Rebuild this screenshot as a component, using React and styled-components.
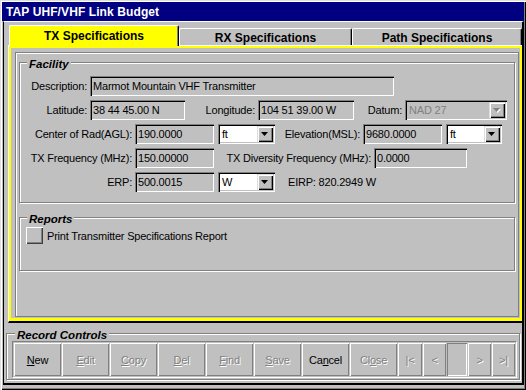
import React from 'react';
import styled, { createGlobalStyle } from 'styled-components';

const Global = createGlobalStyle`
  html, body { margin: 0; padding: 0; background: #c0c0c0; }
  body { font-family: "Liberation Sans", Arial, sans-serif; font-size: 11px; color: #000; letter-spacing: -0.2px; }
  * { box-sizing: border-box; }
`;

const sunken = `
  box-shadow: inset 1px 1px 0 #808080, inset 2px 2px 0 #000,
    inset -1px -1px 0 #fff, inset -2px -2px 0 #c0c0c0;
`;
const raised = `
  box-shadow: inset 1px 1px 0 #dfdfdf, inset 2px 2px 0 #fff,
    inset -1px -1px 0 #000, inset -2px -2px 0 #808080;
`;

const Window = styled.div`
  width: 526px;
  height: 390px;
  background: #c0c0c0;
  padding: 2px 2px 5px 2px;
  display: flex;
  flex-direction: column;
  box-shadow: inset 1px 1px 0 #dfdfdf, inset 2px 2px 0 #fff,
    inset -1px -1px 0 #000, inset -2px -2px 0 #808080;
`;

const TitleBar = styled.div`
  height: 19px;
  flex: none;
  background: #000080;
  color: #fff;
  font-weight: bold;
  font-size: 12px;
  display: flex;
  align-items: center;
  padding-left: 4px;
  letter-spacing: 0.1px;
`;

const Client = styled.div`
  flex: 1;
  margin-left: 1px;
  border-top: 1px solid #fff;
  border-left: 1px solid #000;
  border-right: 2px solid #000;
  border-bottom: 2px solid #000;
  display: flex;
  flex-direction: column;
`;

const TabRow = styled.div`
  height: 23px;
  flex: none;
  display: flex;
  align-items: flex-end;
  padding: 3px 0 0 5px;
  position: relative;
  z-index: 2;
`;

const Tab = styled.div`
  width: ${p => p.$w}px;
  height: ${p => (p.$active ? 21 : 17)}px;
  margin-bottom: ${p => (p.$active ? -1 : 0)}px;
  background: ${p => (p.$active ? '#ffff00' : '#c0c0c0')};
  border-top: 1px solid #fff;
  border-left: 1px solid #fff;
  border-right: 1px solid #000;
  border-radius: 2px 2px 0 0;
  box-shadow: inset -1px 0 0 #808080;
  font-weight: bold;
  font-size: 12px;
  letter-spacing: 0;
  display: flex;
  align-items: center;
  justify-content: center;
  padding-top: ${p => (p.$active ? 0 : 1)}px;
`;

const Panel = styled.div`
  margin-left: 4px;
  width: 514px;
  height: 278px;
  flex: none;
  border-top: 1px solid #fff;
  border-left: 1px solid #fff;
  border-bottom: 2px solid #000;
  display: flex;
`;

const PanelFace = styled.div`
  flex: 1;
  border: 2px solid #ffff00;
  border-bottom-width: 3px;
  padding: 4px 1px 1px 4px;
  display: flex;
`;

const Frame = styled.div`
  flex: 1;
  border: 1px solid #808080;
  box-shadow: inset 1px 1px 0 #fff;
  padding: 0 3px 0 3px;
  display: flex;
  flex-direction: column;
`;

const GroupBox = styled.div`
  position: relative;
  flex: none;
  margin-top: ${p => p.$mt || 0}px;
  margin-left: ${p => p.$ml || 0}px;
  width: ${p => (p.$w ? `${p.$w}px` : 'auto')};
  height: ${p => (p.$h ? `${p.$h}px` : 'auto')};
  border: 1px solid #808080;
  box-shadow: inset 1px 1px 0 #fff, 1px 1px 0 #fff;
  padding: ${p => p.$pad};
`;

const Caption = styled.span`
  position: absolute;
  top: -5px;
  left: ${p => p.$left}px;
  padding: 0 2px;
  background: #c0c0c0;
  font-weight: bold;
  font-style: italic;
  font-size: 11.5px;
  line-height: 12px;
  letter-spacing: 0;
`;

const Rows = styled.div`
  display: flex;
  flex-direction: column;
  gap: 4px;
`;

const Row = styled.div`
  display: flex;
  align-items: center;
  height: 20px;
`;

const Label = styled.div`
  width: ${p => p.$w}px;
  flex: none;
  text-align: right;
  padding-right: 3px;
  white-space: nowrap;
`;

const Field = styled.div`
  width: ${p => p.$w}px;
  height: 20px;
  flex: none;
  background: #c0c0c0;
  ${sunken}
  padding: 0 3px;
  display: flex;
  align-items: center;
  white-space: nowrap;
  overflow: hidden;
`;

const SelectBox = styled.div`
  width: ${p => p.$w}px;
  height: 20px;
  flex: none;
  margin-left: ${p => p.$ml || 0}px;
  background: ${p => (p.$disabled ? '#c0c0c0' : '#fff')};
  ${sunken}
  padding: 2px;
  display: flex;
  align-items: center;
`;

const SelectText = styled.div`
  flex: 1;
  padding-left: 2px;
  color: ${p => (p.$disabled ? '#808080' : '#000')};
`;

const DropBtn = styled.div`
  width: 16px;
  height: 16px;
  flex: none;
  background: #c0c0c0;
  ${raised}
  display: flex;
  align-items: center;
  justify-content: center;
`;

const Plain = styled.div`
  margin-left: ${p => p.$ml || 0}px;
  white-space: nowrap;
`;

const CheckRow = styled.div`
  display: flex;
  align-items: center;
  gap: 4px;
`;

const SquareBtn = styled.div`
  width: 17px;
  height: 17px;
  background: #c0c0c0;
  box-shadow: inset 1px 1px 0 #fff, inset -1px -1px 0 #404040, inset -2px -2px 0 #808080;
`;

const ButtonFrame = styled.div`
  border: 1px solid;
  border-color: #808080 #fff #fff #808080;
  padding: 1px;
  height: 37px;
  display: flex;
  gap: 1px;
`;

const Btn = styled.div`
  width: ${p => p.$w}px;
  flex: none;
  background: #c0c0c0;
  box-shadow: inset 1px 1px 0 #fff, inset -1px -1px 0 #808080;
  display: flex;
  align-items: center;
  justify-content: center;
  color: ${p => (p.$disabled ? '#808080' : '#000')};
  text-shadow: ${p => (p.$disabled ? '1px 1px 0 #fff' : 'none')};
  white-space: pre;
  u { text-decoration: underline; }
`;

const NavField = styled.div`
  width: ${p => p.$w}px;
  flex: none;
  background: #c0c0c0;
  box-shadow: inset 1px 1px 0 #808080, inset -1px -1px 0 #fff;
`;

const Arrow = ({ disabled }) => (
  <svg width="8" height="5" viewBox="0 0 8 5">
    {disabled && <polygon points="1,1 8,1 4.5,5" fill="#fff" />}
    <polygon points="0,0 7,0 3.5,4" fill={disabled ? '#808080' : '#000'} />
  </svg>
);

const Select = ({ w, ml, value, disabled }) => (
  <SelectBox $w={w} $ml={ml} $disabled={disabled}>
    <SelectText $disabled={disabled}>{value}</SelectText>
    <DropBtn>
      <Arrow disabled={disabled} />
    </DropBtn>
  </SelectBox>
);

const buttons = [
  { pre: '', u: 'N', post: 'ew', disabled: false },
  { pre: '', u: 'E', post: 'dit', disabled: true },
  { pre: '', u: 'C', post: 'opy', disabled: true },
  { pre: '', u: 'D', post: 'el', disabled: true },
  { pre: '', u: 'F', post: 'ind', disabled: true },
  { pre: '', u: 'S', post: 'ave', disabled: true },
  { pre: 'Ca', u: 'n', post: 'cel', disabled: false },
  { pre: 'Cl', u: 'o', post: 'se', disabled: true },
];

export default function App() {
  return (
    <>
      <Global />
      <Window>
        <TitleBar>TAP UHF/VHF Link Budget</TitleBar>
        <Client>
          <TabRow>
            <Tab $w={170} $active>TX Specifications</Tab>
            <Tab $w={173}>RX Specifications</Tab>
            <Tab $w={170}>Path Specifications</Tab>
          </TabRow>
          <Panel>
            <PanelFace>
              <Frame>
                <GroupBox $mt={9} $pad="13px 0 10px 0">
                  <Caption $left={7}>Facility</Caption>
                  <Rows>
                    <Row>
                      <Label $w={70}>Description:</Label>
                      <Field $w={304}>Marmot Mountain VHF Transmitter</Field>
                    </Row>
                    <Row>
                      <Label $w={70}>Latitude:</Label>
                      <Field $w={95}>38 44 45.00 N</Field>
                      <Label $w={73}>Longitude:</Label>
                      <Field $w={96}>104 51 39.00 W</Field>
                      <Label $w={51}>Datum:</Label>
                      <Select w={102} value="NAD 27" disabled />
                    </Row>
                    <Row>
                      <Label $w={115}>Center of Rad(AGL):</Label>
                      <Field $w={79}>190.0000</Field>
                      <Select w={57} ml={4} value="ft" />
                      <Label $w={88}>Elevation(MSL):</Label>
                      <Field $w={79}>9680.0000</Field>
                      <Select w={56} ml={4} value="ft" />
                    </Row>
                    <Row>
                      <Label $w={115}>TX Frequency (MHz):</Label>
                      <Field $w={79}>150.00000</Field>
                      <Label $w={160}>TX Diversity Frequency (MHz):</Label>
                      <Field $w={93}>0.0000</Field>
                    </Row>
                    <Row>
                      <Label $w={115}>ERP:</Label>
                      <Field $w={79}>500.0015</Field>
                      <Select w={57} ml={4} value="W" />
                      <Plain $ml={13}>EIRP: 820.2949 W</Plain>
                    </Row>
                  </Rows>
                </GroupBox>
                <GroupBox $mt={14} $h={54} $pad="9px 0 0 6px">
                  <Caption $left={7}>Reports</Caption>
                  <CheckRow>
                    <SquareBtn />
                    <span>Print Transmitter Specifications Report</span>
                  </CheckRow>
                </GroupBox>
              </Frame>
            </PanelFace>
          </Panel>
          <GroupBox $mt={10} $ml={2} $w={514} $h={47} $pad="7px 2px 1px 5px">
            <Caption $left={8}>Record Controls</Caption>
            <ButtonFrame>
              {buttons.map((b, i) => (
                <Btn key={i} $w={47} $disabled={b.disabled}>
                  {b.pre}
                  <u>{b.u}</u>
                  {b.post}
                </Btn>
              ))}
              <Btn $w={24} $disabled>|&lt;</Btn>
              <Btn $w={23} $disabled>&lt;</Btn>
              <NavField $w={20} />
              <Btn $w={23} $disabled>&gt;</Btn>
              <Btn $w={23} $disabled>&gt;|</Btn>
            </ButtonFrame>
          </GroupBox>
        </Client>
      </Window>
    </>
  );
}
